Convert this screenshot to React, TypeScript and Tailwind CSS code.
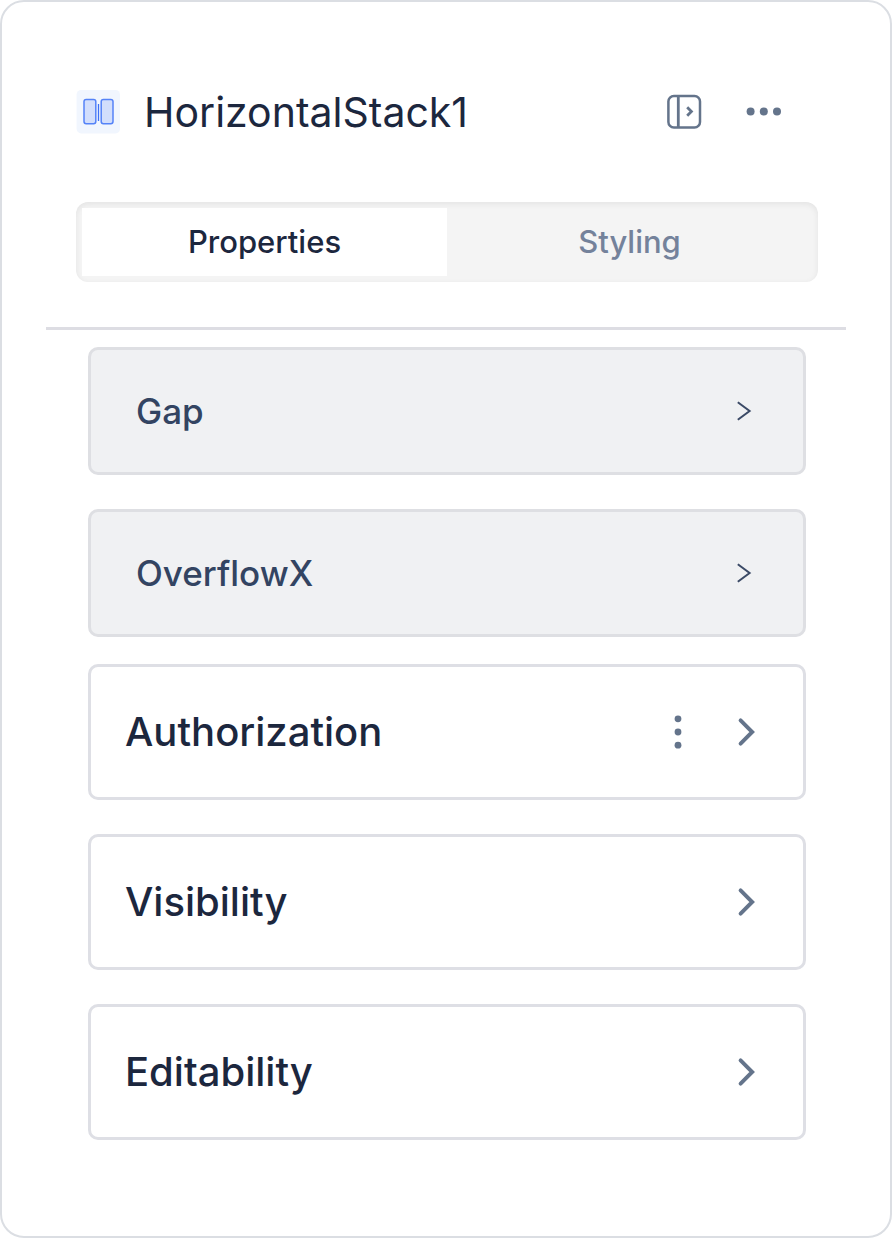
import { useState } from "react";

function StackIcon() {
  return (
    <svg className="size-11 shrink-0" viewBox="0 0 44 44" fill="none" aria-hidden="true">
      <rect x="0.6" y="0" width="43.4" height="43.4" rx="4.5" fill="#f1f6fe" />
      <g fill="#d2defc" stroke="#5583f8" strokeWidth="1.5">
        <rect x="8" y="9.4" width="11.8" height="24.4" rx="2.2" />
        <rect x="25.2" y="9.4" width="11.8" height="24.4" rx="2.2" />
      </g>
      <path d="M22.5 14V31" stroke="#3e70f5" strokeWidth="1.3" />
    </svg>
  );
}

function PanelIcon() {
  return (
    <svg className="h-9 w-9" viewBox="0 0 36 36" fill="none" stroke="#64748b" aria-hidden="true">
      <rect x="2.4" y="1.9" width="31.6" height="31.6" rx="5.5" strokeWidth="2.5" />
      <path d="M12.3 2v31.5" strokeWidth="2.8" />
      <path d="m21.2 13.3 4.2 4.2-4.2 4.2" strokeWidth="2.8" />
    </svg>
  );
}

function MoreIcon() {
  return (
    <svg className="h-9 w-9" viewBox="0 0 36 36" fill="#64748b" aria-hidden="true">
      <circle cx="4.6" cy="17.5" r="4" />
      <circle cx="17.8" cy="17.5" r="4" />
      <circle cx="31" cy="17.5" r="4" />
    </svg>
  );
}

function ThinChevron() {
  return (
    <svg className="h-5 w-4" viewBox="0 0 16 20" fill="none" stroke="#3b4a66" strokeWidth="2" aria-hidden="true">
      <path d="m1.8 1.3 11.8 8.7L1.8 18.7" />
    </svg>
  );
}

function BoldChevron() {
  return (
    <svg
      className="h-8 w-5"
      viewBox="0 0 20 32"
      fill="none"
      stroke="#64748b"
      strokeWidth="3.9"
      strokeLinecap="round"
      aria-hidden="true"
    >
      <path d="M4.6 4.4 16.2 16 4.6 27.6" />
    </svg>
  );
}

function FieldRow({ label }: { label: string }) {
  return (
    <button
      type="button"
      className="flex w-full items-center justify-between rounded-[10px] border-[3px] border-[#dedfe3] bg-[#f0f1f3] py-9 pr-[51px] pl-[45px] text-left text-[35px] leading-[50px] font-medium text-[#334462]"
    >
      {label}
      <ThinChevron />
    </button>
  );
}

function Section({ label, menu = false }: { label: string; menu?: boolean }) {
  return (
    <div className="flex items-center rounded-[10px] border-[3px] border-[#dedfe5] bg-white py-10 pr-[47px] pl-[34px]">
      <h2 className="flex-1 text-[40px] leading-[50px] font-medium text-[#1c273e]">{label}</h2>
      {menu && (
        <button type="button" aria-label={`${label} options`} className="mr-[52px]">
          <svg className="h-9 w-3" viewBox="0 0 12 36" fill="#64748b" aria-hidden="true">
            <circle cx="6" cy="4.8" r="3.4" />
            <circle cx="6" cy="18" r="3.4" />
            <circle cx="6" cy="31.2" r="3.4" />
          </svg>
        </button>
      )}
      <button type="button" aria-label={`Expand ${label}`}>
        <BoldChevron />
      </button>
    </div>
  );
}

const tabs = ["Properties", "Styling"];

export default function App() {
  const [active, setActive] = useState("Properties");

  return (
    <main className="min-h-screen rounded-3xl border-2 border-[#dbdee3] bg-white px-11 pt-[88px] pb-24 font-['Inter',sans-serif]">
      <header className="flex h-11 items-center pr-16 pl-[30px]">
        <StackIcon />
        <h1 className="ml-6 flex-1 text-[41px] leading-[44px] text-[#1c273e]">HorizontalStack1</h1>
        <button type="button" aria-label="Collapse panel" className="mr-11">
          <PanelIcon />
        </button>
        <button type="button" aria-label="More options">
          <MoreIcon />
        </button>
      </header>

      <div className="mt-[68px] pr-7 pl-[30px]">
        <div
          role="tablist"
          className="grid grid-cols-2 rounded-xl bg-[#f4f4f4] p-1.5 shadow-[inset_0_2px_6px_rgba(0,0,0,0.07)]"
        >
          {tabs.map((tab) => (
            <button
              key={tab}
              type="button"
              role="tab"
              aria-selected={active === tab}
              onClick={() => setActive(tab)}
              className={
                active === tab
                  ? "bg-white py-3 text-[31px] leading-[44px] font-medium text-[#1c273e]"
                  : "py-3 text-[31px] leading-[44px] font-medium text-[#74829b]"
              }
            >
              {tab}
            </button>
          ))}
        </div>
      </div>

      <hr className="mt-[45px] border-t-[3px] border-[#dddde3]" />

      <div className="mt-[17px] flex flex-col gap-[34px] pr-10 pl-[42px]">
        <FieldRow label="Gap" />
        <div className="flex flex-col gap-[27px]">
          <FieldRow label="OverflowX" />
          <Section label="Authorization" menu />
        </div>
        <Section label="Visibility" />
        <Section label="Editability" />
      </div>
    </main>
  );
}
